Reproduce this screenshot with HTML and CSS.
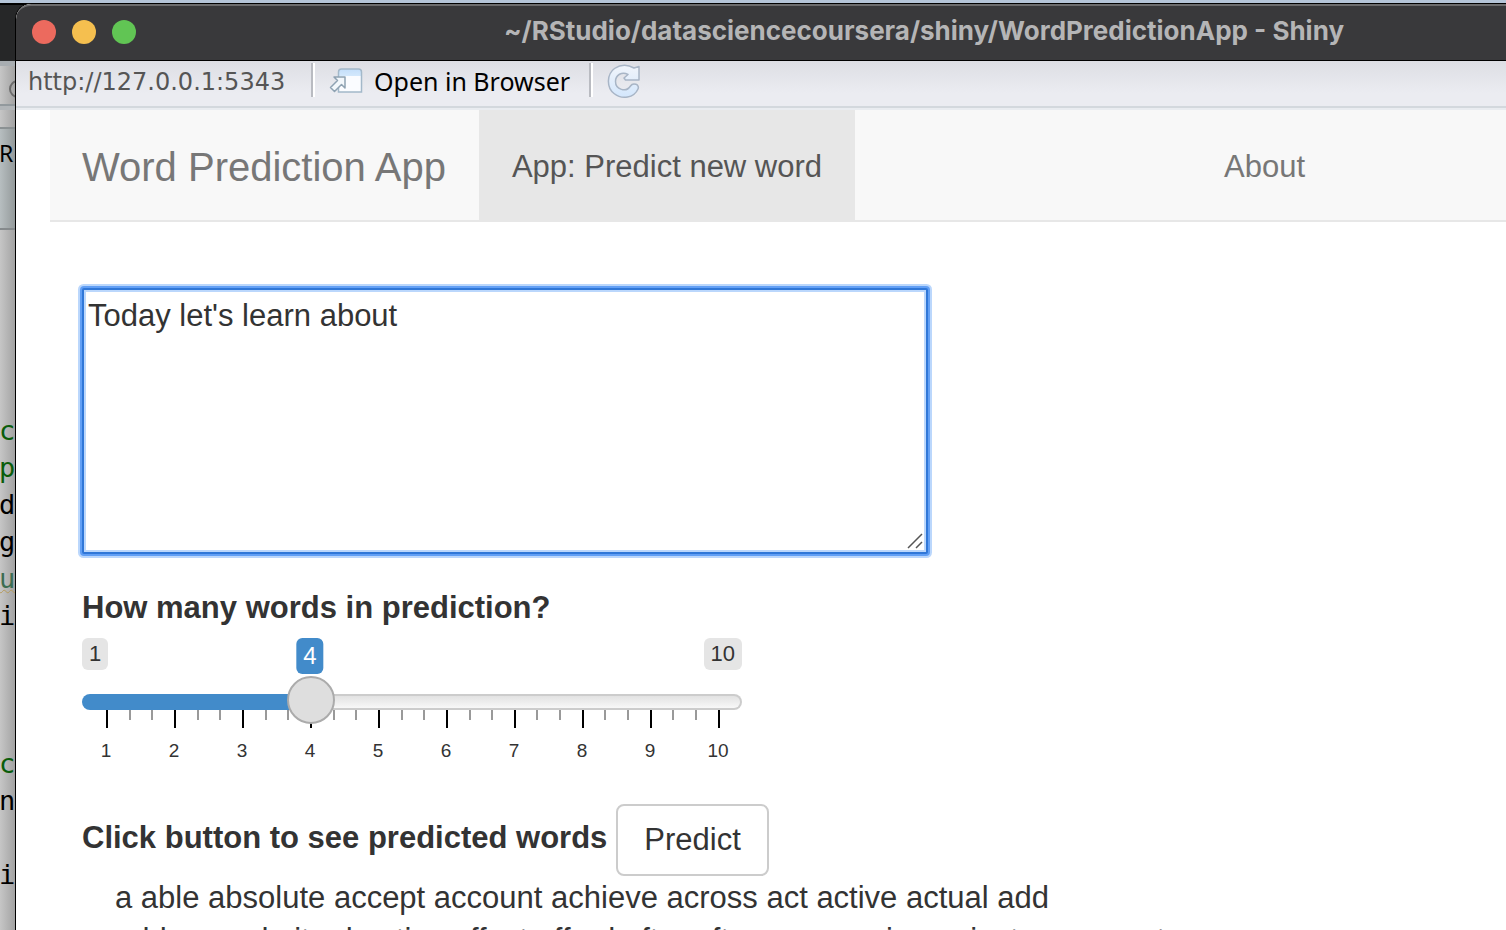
FILE: index.html
```html
<!DOCTYPE html>
<html lang="en">
<head>
<meta charset="utf-8">
<title>WordPredictionApp - Shiny</title>
<link rel="stylesheet" href="styles.css">
</head>
<body>
<div class="desktop">
  <aside class="editor" aria-label="Editor window">
    <div class="editor-title"></div>
    <div class="editor-search">
      <svg width="15" height="36" viewBox="0 0 15 36"><circle cx="18" cy="18" r="8" fill="none" stroke="#6b6b6b" stroke-width="2"/></svg>
    </div>
    <div class="editor-band"></div>
    <div class="editor-tabs">R</div>
    <div class="editor-code">
      <span class="comment">c</span>
      <span class="comment">p</span>
      <span>d</span>
      <span>g</span>
      <span class="name">u</span>
      <span>i</span>
      <span></span>
      <span></span>
      <span></span>
      <span class="comment">c</span>
      <span>n</span>
      <span></span>
      <span>i</span>
    </div>
  </aside>

  <div class="window">
    <header class="titlebar">
      <div class="lights"><i class="light close"></i><i class="light minimize"></i><i class="light zoom"></i></div>
      <div class="title">~/RStudio/datasciencecoursera/shiny/WordPredictionApp - Shiny</div>
    </header>

    <div class="toolbar">
      <span class="address">http://127.0.0.1:5343</span>
      <span class="separator"></span>
      <button class="tool" type="button">
        <svg width="34" height="28" viewBox="0 0 34 28">
          <defs><linearGradient id="pane" x1="0" y1="0" x2="0" y2="1"><stop offset="0" stop-color="#c3defa"/><stop offset=".3" stop-color="#d3e8fc"/><stop offset=".31" stop-color="#fafcff"/></linearGradient></defs>
          <path d="M9.500 25V5q0-3 3-3h17q3 0 3 3v20z" fill="url(#pane)" stroke="#a3b8c9" stroke-width="1.500"/>
          <path d="M5 10h11v11l-3.500-3.500-7 7-4-4 7-7z" fill="#f2f7fb" stroke="#8ea2b2" stroke-width="1.500" stroke-linejoin="round"/>
        </svg>
        Open in Browser
      </button>
      <span class="separator"></span>
      <button class="tool" type="button" aria-label="Reload">
        <svg width="34" height="36" viewBox="0 0 34 36">
          <defs><linearGradient id="reload" x1="0" y1="0" x2="0" y2="1"><stop offset="0" stop-color="#f1f5fb"/><stop offset="1" stop-color="#d3e6fc"/></linearGradient></defs>
          <path d="M32 3.500V17H18.500l-1.500-2 4-3.500C15 8 8.500 12 8.500 18.500c0 8 10.500 11.500 15 4.500 2.500-4 9.500-1.500 7.500 3C27 35 15 37 7 30.500-1 24 0 11 7.500 5.500 13.500 1.500 21 1.500 27 5z" fill="url(#reload)" stroke="#a8b5c6" stroke-width="1.500" stroke-linejoin="round"/>
        </svg>
      </button>
    </div>

    <div class="page">
      <nav class="navbar">
        <a class="brand" href="#">Word Prediction App</a>
        <a class="tab active" href="#predict">App: Predict new word</a>
        <span class="gap"></span>
        <a class="tab" href="#about">About</a>
        <span class="tail"></span>
      </nav>

      <main class="content">
        <div class="text-wrap">
          <textarea class="text-input" aria-label="Text">Today let's learn about</textarea>
          <svg class="grip" width="16" height="16" viewBox="0 0 16 16"><path d="M1 15 15 1M9 15l6-6" stroke="#555" stroke-width="1.500" fill="none"/></svg>
        </div>

        <div class="slider">
          <label class="label" for="count">How many words in prediction?</label>
          <div class="bounds"><span class="bound">1</span><output class="value" for="count">4</output><span class="bound">10</span></div>
          <div class="rail">
            <div class="ticks"><i></i><i></i><i></i><i></i><i></i><i></i><i></i><i></i><i></i><i></i><i></i><i></i><i></i><i></i><i></i><i></i><i></i><i></i><i></i><i></i><i></i><i></i><i></i><i></i><i></i><i></i><i></i><i></i></div>
            <input class="range" id="count" type="range" min="1" max="10" value="4">
          </div>
          <div class="scale"><span>1</span><span>2</span><span>3</span><span>4</span><span>5</span><span>6</span><span>7</span><span>8</span><span>9</span><span>10</span></div>
        </div>

        <div class="action">
          <label class="label" for="predict">Click button to see predicted words</label>
          <button class="predict" id="predict" type="button">Predict</button>
        </div>
        <p class="words">a able absolute accept account achieve across act active actual add<br>address admit advertise affect afford after afternoon again against age agent</p>
      </main>
    </div>
  </div>
</div>
</body>
</html>
```
FILE: styles.css
```css
* { box-sizing: border-box; }

body {
  margin: 0;
  color: #333;
  font: 31px/42px "Liberation Sans", Arial, sans-serif;
}

button, textarea, input { font: inherit; color: inherit; margin: 0; }

.desktop {
  display: flex;
  height: 100vh;
  padding-top: 3px;
  overflow: hidden;
  background: linear-gradient(#b5c5d8 3px, #000 3px, #000 5px, #262728 5px);
}

/* Window behind, visible only at the left edge */
.editor {
  display: flex;
  flex-direction: column;
  flex: 0 0 15px;
  overflow: hidden;
  background: linear-gradient(90deg, #c6c6c6, #a3a3a3);
  font-family: "Noto Sans", sans-serif;
}

.editor-title { height: 58px; background: #262728; border-top: 2px solid #000; }

.editor-search {
  height: 45px;
  padding-top: 5px;
  border-top: 5px solid #a8adb1;
  border-bottom: 2px solid #92999d;
}

.editor-search svg { display: block; }

.editor-band {
  height: 23px;
  border-top: 4px solid #b1b5b8;
  border-bottom: 2px solid #8b9193;
}

.editor-tabs {
  height: 101px;
  padding-top: 3px;
  background: linear-gradient(90deg, #b7bec0, #949a9b);
  border-bottom: 2px solid #858a8c;
  color: #000;
  font-size: 23px;
  text-indent: -1px;
}

.editor-code {
  display: flex;
  flex-direction: column;
  padding-top: 182px;
  color: #000;
  font: 27px/37px "DejaVu Sans Mono", monospace;
  text-indent: -1px;
}

.editor-code span { flex: 0 0 37px; }
.editor-code .comment { color: #0a5d0a; }
.editor-code .name { color: #3c6d52; text-decoration: underline wavy #b59a5b 1px; }

/* App window */
.window {
  display: flex;
  flex: 1;
  flex-direction: column;
  min-width: 0;
  overflow: hidden;
  background: #fff;
  border-top: 1px solid #000;
  border-left: 1px solid #000;
  border-top-left-radius: 16px;
}

.titlebar {
  display: grid;
  grid-template-columns: 310px 1fr;
  align-items: center;
  flex: none;
  height: 57px;
  padding: 0 0 2px 16px;
  background: #39393b;
  border-top: 2px solid #6c6c6d;
  border-bottom: 1px solid #000;
  border-top-left-radius: 15px;
}

.lights { display: flex; gap: 16px; }
.light { width: 24px; height: 24px; border-radius: 50%; }
.close { background: #ec6a5e; }
.minimize { background: #f5bf4f; }
.zoom { background: #61c554; }

.title {
  padding-bottom: 2px;
  color: #b5b5b6;
  font: 700 26px/32px Inter, sans-serif;
  text-align: center;
  white-space: nowrap;
}

.toolbar {
  display: flex;
  flex: none;
  height: 49px;
  padding: 2px 12px 0;
  background: linear-gradient(#dddee4, #ebecf1 32px);
  border-bottom: 2px solid #e9ecf0;
  box-shadow: inset 0 -2px #d3d8dd;
}

.address {
  width: 264px;
  color: #555;
  font: 24px/38px "DejaVu Sans", sans-serif;
}

.separator {
  width: 4px;
  height: 34px;
  margin-left: 19px;
  background: linear-gradient(90deg, #b9bbc1 2px, #fff 2px);
}

.tool {
  display: flex;
  align-items: center;
  gap: 11px;
  height: 36px;
  margin-left: 14px;
  padding: 0;
  background: none;
  border: 0;
  color: #000;
  font: 25px/36px "Noto Sans", sans-serif;
}

.page {
  flex: 1;
  min-height: 0;
  padding-left: 34px;
  overflow: hidden;
}

.navbar {
  display: flex;
  height: 112px;
  background: #f8f8f8;
  border-bottom: 2px solid #e7e7e7;
}

.navbar a {
  padding: 0 33px;
  color: #777;
  line-height: 114px;
  text-decoration: none;
  white-space: nowrap;
}

.navbar .brand { padding-left: 32px; font-size: 40px; }
.navbar .active { height: 112px; background: #e7e7e7; color: #555; }
.gap { flex: 2; }
.tail { flex: 1; }

.content { padding: 66px 32px 0; }

.text-wrap { position: relative; width: 846px; max-width: 100%; }

.text-input {
  display: block;
  width: 100%;
  height: 266px;
  padding: 5px 4px;
  background: #fff;
  border: 2px solid #3077d8;
  border-radius: 2px;
  outline: 0;
  box-shadow: 0 0 0 2px #619ff5, 0 0 0 4px #bbd7fc, inset 0 0 0 2px #bbd7fc;
  resize: none;
}

.grip { position: absolute; right: 5px; bottom: 5px; }

.slider { width: 660px; max-width: 100%; margin-top: 33px; }
.label { font-weight: 700; }
.slider .label { display: block; }

.bounds {
  position: relative;
  display: flex;
  justify-content: space-between;
  margin-top: 9px;
}

.bound {
  padding: 0 7px;
  background: #e5e5e5;
  border-radius: 6px;
  font-size: 22px;
  line-height: 32px;
}

.value {
  position: absolute;
  left: 228px;
  padding: 0 7px;
  background: #428bca;
  border-radius: 6px;
  color: #fff;
  font-size: 24px;
  line-height: 36px;
  transform: translateX(-50%);
}

.rail { display: grid; margin-top: 6px; }
.rail > * { grid-area: 1 / 1; }

.ticks {
  display: flex;
  align-self: end;
  justify-content: space-between;
  height: 18px;
  margin: 0 22px 0 24px;
}

.ticks i { width: 2px; height: 10px; background: #999; }
.ticks i:nth-child(3n + 1) { height: 18px; background: #000; }

.range {
  position: relative;
  width: 100%;
  height: 52px;
  background: none;
  appearance: none;
}

.range::-webkit-slider-runnable-track {
  height: 16px;
  border: 2px solid transparent;
  border-radius: 8px;
  background:
    linear-gradient(#428bca, #428bca) 0 0 / 34% 100% no-repeat border-box,
    linear-gradient(#e2e2e2, #f8f8f8) padding-box,
    linear-gradient(#ccc, #ccc) border-box;
}

.range::-webkit-slider-thumb {
  width: 48px;
  height: 48px;
  margin-top: -20px;
  background: #dedede;
  border: 2px solid #ababab;
  border-radius: 50%;
  appearance: none;
}

.scale {
  display: grid;
  grid-template-columns: repeat(10, 1fr);
  margin: 11px -10px 0;
  font-size: 19px;
  line-height: 24px;
  text-align: center;
}

.action {
  display: flex;
  align-items: center;
  gap: 9px;
  margin-top: 41px;
}

.action .label { padding-bottom: 4px; }

.predict {
  height: 72px;
  padding: 0 26px;
  background: #fff;
  border: 2px solid #ccc;
  border-radius: 8px;
}

.words { margin: 1px 0 0; padding-left: 33px; white-space: nowrap; }
```
